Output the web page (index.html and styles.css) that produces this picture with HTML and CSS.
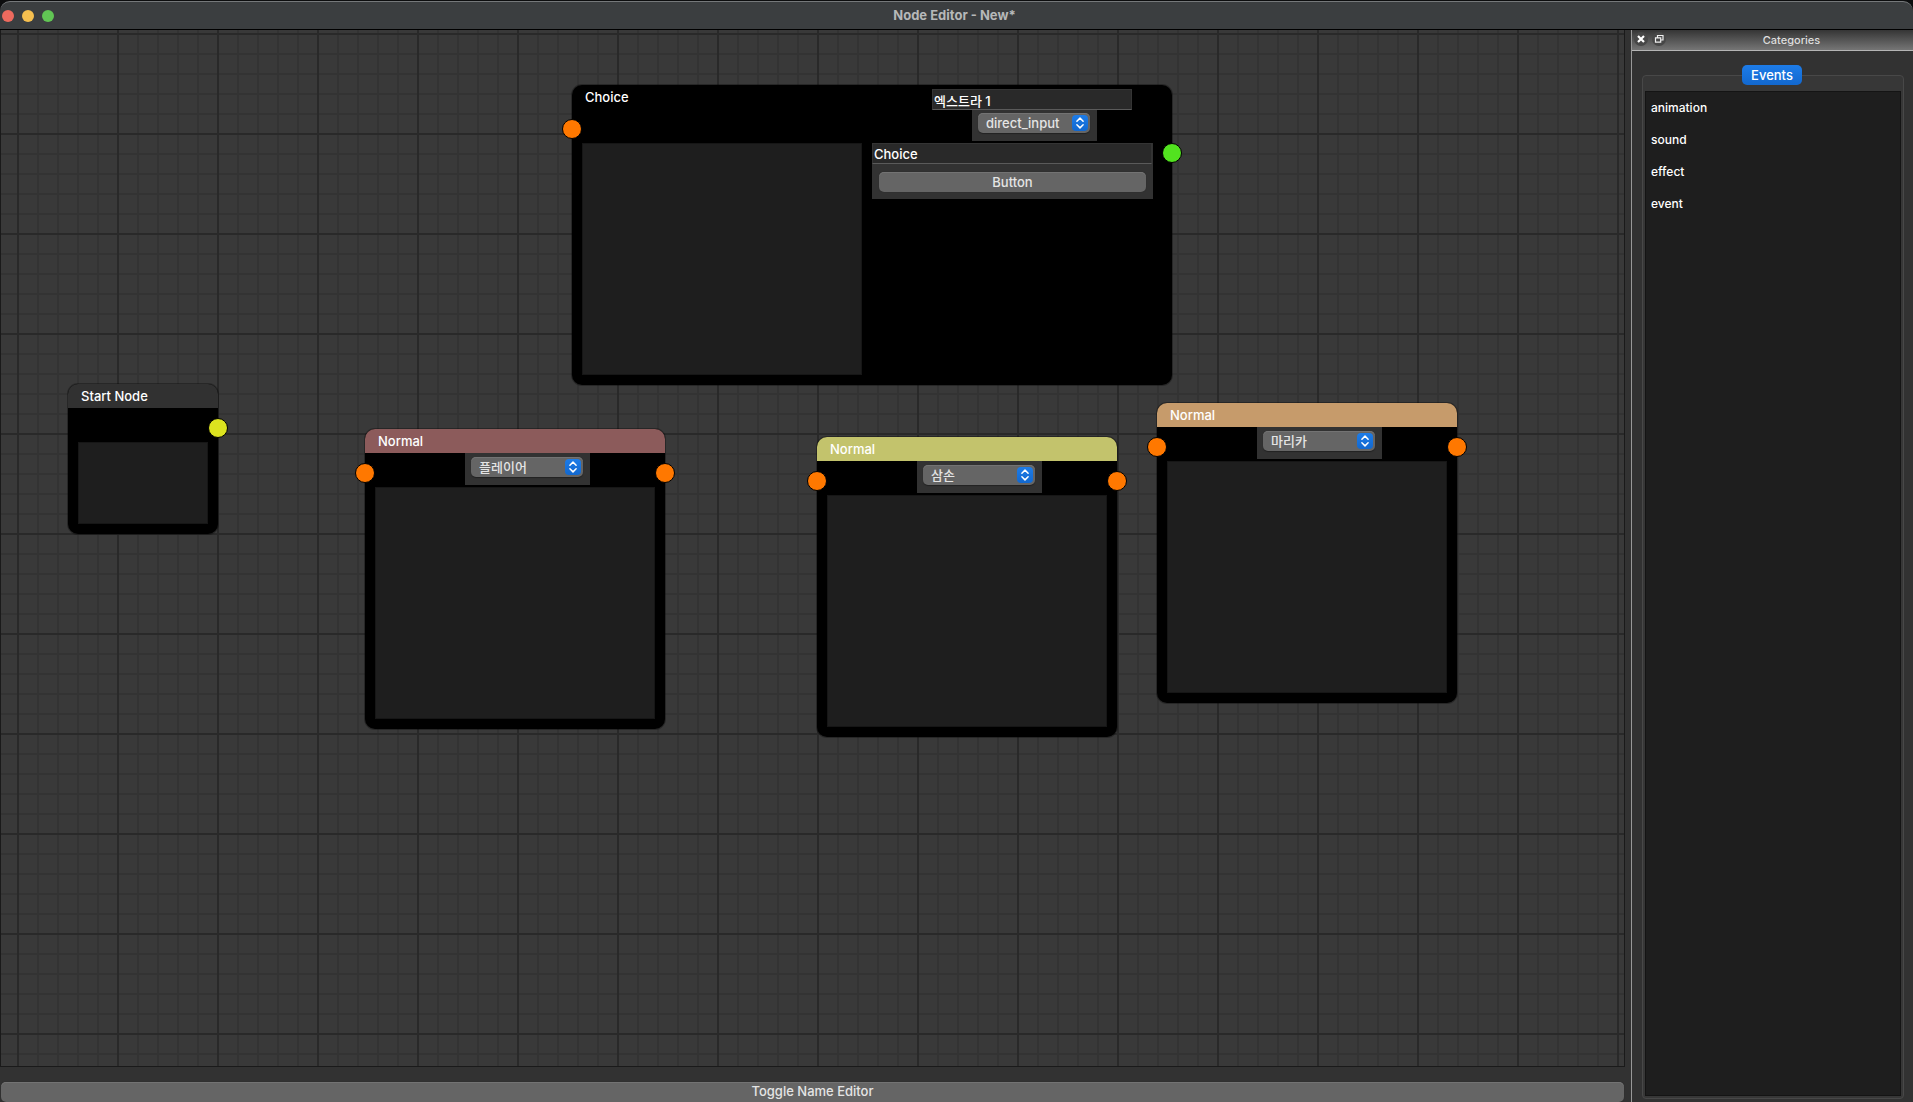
FILE: index.html
```html
<!DOCTYPE html>
<html lang="ko">
<head>
<meta charset="utf-8">
<title>Node Editor - New*</title>
<link rel="stylesheet" href="styles.css">
</head>
<body>
<svg width="0" height="0" class="defs" aria-hidden="true">
  <symbol id="updown" viewBox="0 0 16 16">
    <path d="M4.9 6.2 8 3.1l3.1 3.1M4.9 9.8 8 12.9l3.1-3.1" fill="none" stroke="#fff" stroke-width="1.5" stroke-linecap="round" stroke-linejoin="round"/>
  </symbol>
</svg>
<div class="window">
  <header class="titlebar">
    <div class="lights">
      <button class="light red" aria-label="Close"></button>
      <button class="light yellow" aria-label="Minimize"></button>
      <button class="light green" aria-label="Zoom"></button>
    </div>
    <h1 class="window-title">Node Editor - New*</h1>
  </header>
  <div class="workspace">
    <main class="editor">
      <div class="canvas">
        <section class="node node-start">
          <h2 class="node-title">Start Node</h2>
          <div class="node-bar"></div>
          <textarea class="node-text" aria-label="Start text"></textarea>
          <span class="socket out yellow-socket"></span>
        </section>

        <section class="node node-choice">
          <div class="choice-head">
            <h2 class="node-title">Choice</h2>
            <div class="speaker">
              <input class="field" type="text" value="엑스트라 1" aria-label="Speaker name">
              <div class="combo-wrap">
                <div class="combo">
                  <select aria-label="Speaker"><option>direct_input</option></select>
                  <svg class="combo-arrow"><use href="#updown"/></svg>
                </div>
              </div>
            </div>
          </div>
          <div class="choice-body">
            <textarea class="node-text" aria-label="Choice text"></textarea>
            <div class="options">
              <input class="field" type="text" value="Choice" aria-label="Option">
              <button class="push">Button</button>
            </div>
          </div>
          <span class="socket in"></span>
          <span class="socket out green-socket"></span>
        </section>

        <section class="node node-player">
          <h2 class="node-title">Normal</h2>
          <div class="node-bar">
            <div class="combo-wrap">
              <div class="combo">
                <select aria-label="Speaker"><option>플레이어</option></select>
                <svg class="combo-arrow"><use href="#updown"/></svg>
              </div>
            </div>
          </div>
          <textarea class="node-text" aria-label="Dialogue"></textarea>
          <span class="socket in"></span>
          <span class="socket out"></span>
        </section>

        <section class="node node-samson">
          <h2 class="node-title">Normal</h2>
          <div class="node-bar">
            <div class="combo-wrap">
              <div class="combo">
                <select aria-label="Speaker"><option>삼손</option></select>
                <svg class="combo-arrow"><use href="#updown"/></svg>
              </div>
            </div>
          </div>
          <textarea class="node-text" aria-label="Dialogue"></textarea>
          <span class="socket in"></span>
          <span class="socket out"></span>
        </section>

        <section class="node node-marika">
          <h2 class="node-title">Normal</h2>
          <div class="node-bar">
            <div class="combo-wrap">
              <div class="combo">
                <select aria-label="Speaker"><option>마리카</option></select>
                <svg class="combo-arrow"><use href="#updown"/></svg>
              </div>
            </div>
          </div>
          <textarea class="node-text" aria-label="Dialogue"></textarea>
          <span class="socket in"></span>
          <span class="socket out"></span>
        </section>
      </div>
      <button class="toggle">Toggle Name Editor</button>
    </main>

    <aside class="dock">
      <div class="dock-bar">
        <button class="dock-button" aria-label="Close panel">
          <svg viewBox="0 0 14 14"><path d="M4 4l6 6M10 4l-6 6" stroke="#fff" stroke-width="2.2" fill="none"/></svg>
        </button>
        <button class="dock-button" aria-label="Float panel">
          <svg viewBox="0 0 14 14"><path d="M5.5 5.500V3.500h5.500v4.500H9M3.500 5.800h5.200v4.400H3.500z" stroke="#eee" stroke-width="1.200" fill="none"/></svg>
        </button>
        <h2 class="dock-title">Categories</h2>
      </div>
      <div class="tabs">
        <button class="tab" role="tab" aria-selected="true">Events</button>
        <div class="tab-page">
          <ul class="events">
            <li>animation</li>
            <li>sound</li>
            <li>effect</li>
            <li>event</li>
          </ul>
        </div>
      </div>
    </aside>
  </div>
</div>
</body>
</html>
```
FILE: styles.css
```css
* {
  box-sizing: border-box;
}

body {
  margin: 0;
  background: #0c0d0e;
  color: #fff;
  font: 500 13px/16px Inter, "Noto Sans CJK KR", sans-serif;
}

h1, h2, ul {
  margin: 0;
  padding: 0;
  font-size: inherit;
  font-weight: inherit;
}

button, input, select, textarea {
  margin: 0;
  padding: 0;
  border: 0;
  border-radius: 0;
  color: inherit;
  font: inherit;
}

.defs {
  position: absolute;
}

.window {
  display: flex;
  flex-direction: column;
  height: 100vh;
  padding-top: 1px;
}

/* Title bar */
.titlebar {
  display: grid;
  grid-template-columns: 1fr auto 1fr;
  align-items: center;
  flex: none;
  height: 29px;
  padding: 0 2px;
  border-top: 1px solid #75787a;
  border-bottom: 1px solid #000;
  border-radius: 10px 10px 0 0;
  background: #3b3e40;
}

.lights {
  display: flex;
  gap: 8px;
}

.light {
  width: 12px;
  height: 12px;
  border-radius: 50%;
}

.red { background: #ed6a5e; }
.yellow { background: #f5bf4f; }
.green { background: #61c554; }

.window-title {
  padding: 0 4px 2px 0;
  color: #b6b8b9;
  font-weight: 700;
}

.workspace {
  display: flex;
  flex: 1;
  min-height: 0;
  background: #323232;
}

.editor {
  display: flex;
  flex: 1;
  flex-direction: column;
  gap: 15px;
  min-width: 0;
}

/* Canvas: major lines every 100px, minor every 20px */
.canvas {
  position: relative;
  flex: 1;
  overflow: hidden;
  border: 1px solid #1a1a1a;
  border-top: 0;
  background-color: #393939;
  background-image:
    linear-gradient(90deg, #292929 2px, transparent 2px),
    linear-gradient(#292929 2px, transparent 2px),
    linear-gradient(90deg, #333 2px, transparent 2px),
    linear-gradient(#333 2px, transparent 2px);
  background-size: 100px 100px, 100px 100px, 20px 20px, 20px 20px;
  background-position: 16px 3px;
}

.toggle, .push {
  height: 20px;
  border-radius: 5px;
  background: #656565;
  box-shadow: inset 0 1px #737373, 0 0 1px #222;
  color: #e4e4e4;
}

.toggle {
  flex: none;
  margin: 0 1px;
  padding-bottom: 2px;
}

/* Nodes */
.node {
  position: absolute;
  display: flex;
  flex-direction: column;
  width: 300px;
  height: 300px;
  border-radius: 10px;
  background: #000;
  box-shadow: 0 0 0 1px rgba(0, 0, 0, .3);
}

.node-start {
  left: 67px;
  top: 354px;
  width: 150px;
  height: 150px;
}

.node-choice {
  left: 571px;
  top: 55px;
  width: 600px;
}

.node-player { left: 364px; top: 399px; }
.node-samson { left: 816px; top: 407px; }
.node-marika { left: 1156px; top: 373px; }

.node-title {
  flex: none;
  height: 24px;
  padding: 0 13px;
  border-radius: 10px 10px 0 0;
  line-height: 24px;
}

.node-start .node-title { background: #313131; }
.node-player .node-title { background: #8c5b5b; }
.node-samson .node-title { background: #c3c36c; }
.node-marika .node-title { background: #c69b6b; }

.node-bar {
  flex: none;
  height: 34px;
  padding-left: 100px;
}

.node-text {
  flex: 1;
  margin: 0 10px 10px;
  border: 1px solid #161616;
  background: #1e1e1e;
  resize: none;
}

.combo-wrap {
  width: 125px;
  height: 32px;
  padding: 4px 7px 8px 6px;
  background: #323232;
}

.combo {
  display: grid;
  align-items: center;
  height: 20px;
  border-radius: 5px;
  background: #656565;
  box-shadow: inset 0 1px #737373, 0 1px 1px #222;
}

.combo select, .combo-arrow {
  grid-area: 1 / 1;
}

.combo select {
  width: 100%;
  height: 20px;
  padding-left: 8px;
  appearance: none;
  background: transparent;
  color: #e4e4e4;
}

.combo-arrow {
  justify-self: end;
  width: 16px;
  height: 16px;
  margin-right: 2px;
  border-radius: 4px;
  background: linear-gradient(#1d7ce8, #1268cf);
  pointer-events: none;
}

.field {
  height: 21px;
  padding: 1px 1px 0;
  border: 1px solid #343434;
  border-bottom-color: #5a5a5a;
  background: #292929;
}

/* Choice node */
.choice-head {
  display: grid;
  grid-template-columns: 360px 200px;
  flex: none;
  height: 58px;
}

.speaker {
  display: flex;
  flex-direction: column;
  padding-top: 4px;
}

.speaker .combo-wrap {
  height: 31px;
  margin-left: 40px;
  padding-top: 3px;
}

.choice-body {
  display: grid;
  grid-template-columns: 280px 1fr;
  flex: 1;
  gap: 10px;
  padding: 0 19px 10px 10px;
}

.choice-body .node-text {
  margin: 0;
}

.options {
  display: flex;
  flex-direction: column;
  gap: 8px;
  height: 56px;
  background: #323232;
}

.options .field {
  margin-right: 1px;
}

.options .push {
  margin: 0 7px;
}

.socket {
  position: absolute;
  top: 34px;
  width: 20px;
  height: 20px;
  border: 1px solid #000;
  border-radius: 50%;
  background: #ff7800;
}

.in { left: -10px; }
.out { right: -10px; }
.yellow-socket { background: #dce31f; }
.green-socket { top: 58px; background: #52e31f; }

/* Categories panel */
.dock {
  display: flex;
  flex: none;
  flex-direction: column;
  width: 282px;
  margin-left: 6px;
  border-left: 1px solid #999;
}

.dock-bar {
  display: flex;
  align-items: center;
  gap: 4px;
  height: 21px;
  padding: 0 0 2px 2px;
  border-bottom: 1px solid #b5b5b5;
  background: linear-gradient(#353535, #757575);
}

.dock-button {
  width: 14px;
  height: 14px;
  border-radius: 50%;
  background: #474747;
}

.dock-button svg {
  display: block;
}

.dock-title {
  flex: 1;
  align-self: flex-end;
  color: #dedede;
  font-size: 11px;
  text-align: center;
}

.tabs {
  display: flex;
  flex: 1;
  flex-direction: column;
  align-items: center;
  padding: 14px 9px 3px 10px;
}

.tab {
  z-index: 1;
  width: 60px;
  height: 20px;
  margin: 0 2px -10px 0;
  border-radius: 5px;
  background: linear-gradient(#1d7ce8, #1268cf);
}

.tab-page {
  display: flex;
  flex: 1;
  width: 100%;
  padding: 15px 2px 2px;
  border: 1px solid #484848;
  border-radius: 4px;
  background: #373737;
}

.events {
  flex: 1;
  border: 1px solid #141414;
  background: #1e1e1e;
  font-size: 12px;
  list-style: none;
}

.events li {
  padding: 0 5px;
  line-height: 32px;
}
```
